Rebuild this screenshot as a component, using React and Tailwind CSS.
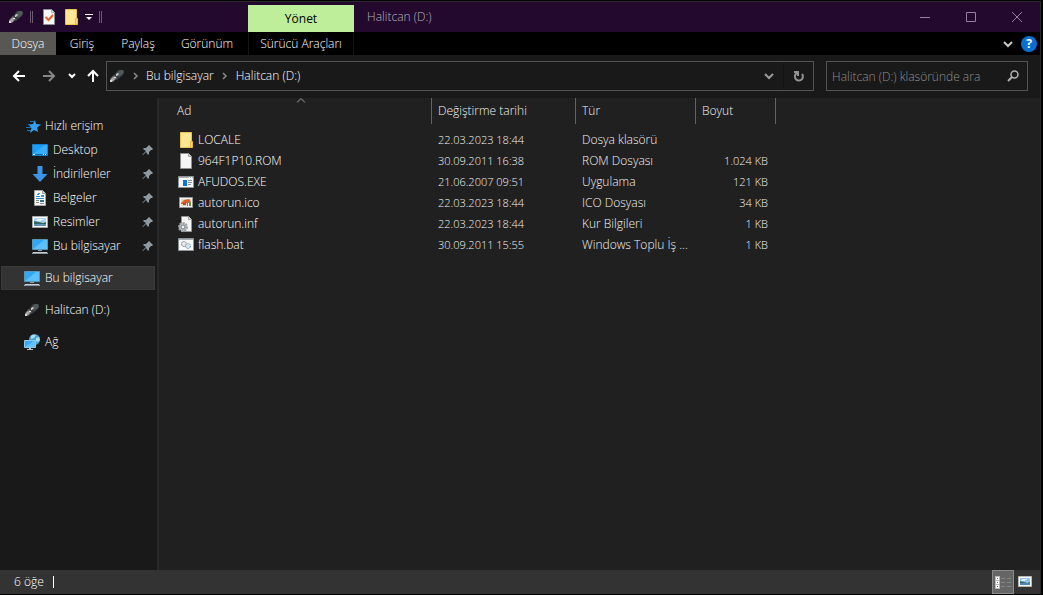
import React, { useState } from "react";

const files = [
  { name: "LOCALE", icon: "folder", date: "22.03.2023 18:44", type: "Dosya klasörü", size: "" },
  { name: "964F1P10.ROM", icon: "file", date: "30.09.2011 16:38", type: "ROM Dosyası", size: "1.024 KB" },
  { name: "AFUDOS.EXE", icon: "exe", date: "21.06.2007 09:51", type: "Uygulama", size: "121 KB" },
  { name: "autorun.ico", icon: "ico", date: "22.03.2023 18:44", type: "ICO Dosyası", size: "34 KB" },
  { name: "autorun.inf", icon: "inf", date: "22.03.2023 18:44", type: "Kur Bilgileri", size: "1 KB" },
  { name: "flash.bat", icon: "bat", date: "30.09.2011 15:55", type: "Windows Toplu İş ...", size: "1 KB" },
];

const quickAccess = [
  { name: "Desktop", icon: "desktop" },
  { name: "İndirilenler", icon: "download" },
  { name: "Belgeler", icon: "docs" },
  { name: "Resimler", icon: "pictures" },
  { name: "Bu bilgisayar", icon: "pc" },
];

const drawings = {
  usb: (
    <>
      <path d="M5 7 9 2h5l1 2-1 3-6 5-4-1z" fill="#353b3d" />
      <path d="m8 5 3-3h3l1 2-1 2-4 3z" fill="#50585a" />
      <path d="m1 11 4-4 3 3-4 4H2l-1-1z" fill="#6c6e6f" />
      <path d="m2 11 2-2 2 2-2 2H2z" fill="#a9a9a9" />
      <path d="M1 12h2v2H1z" fill="#d8d8d8" />
      <path d="m7 6 2-1 1 1-2 2H7z" fill="#c9cdce" />
      <path d="M5 9h2v1H5z" fill="#e4e4e4" />
    </>
  ),
  folder: (
    <>
      <path d="M2.500.5h11v15h-11z" fill="#ffe693" stroke="#e8c254" />
      <path d="M12.500 9.500h2v6h-2z" fill="#fbd977" stroke="#e5b943" />
    </>
  ),
  file: (
    <>
      <path d="M2.500.5h8l3 3v12h-11z" fill="#f6f6f6" stroke="#8f8f8f" />
      <path d="M10.500.5v3h3" fill="#ddd" stroke="#a5a5a5" />
    </>
  ),
  exe: (
    <>
      <path d="M.5 2.500h15v11H.5z" fill="#fafafa" stroke="#8d9499" />
      <path d="M1 3h14v1H1z" fill="#a9afb3" />
      <path d="M11 3h1v1h-1zM13 3h1v1h-1z" fill="#fff" />
      <path d="M5 6h4v6H5z" fill="#0a74d8" />
      <path d="M10 6h4v1h-4zM10 8h4v1h-4zM10 10h3v1h-3z" fill="#8a8f93" />
    </>
  ),
  ico: (
    <>
      <path d="M1.500 2.500h13v10h-13z" fill="#f5f5f5" stroke="#92989b" />
      <path d="M3 4h10v7H3z" fill="#e6d9bc" />
      <path d="m3 8 3-3 5-1 2 3-4 1-3 1H3z" fill="#d9602a" />
      <path d="M5 8h3v2H5z" fill="#8b5640" />
      <path d="M9 7h4v4H9z" fill="#718e4b" />
      <path d="M10 8h1v3h-1z" fill="#e4e5e9" />
    </>
  ),
  inf: (
    <>
      <path d="M3.500.5h7l3 3v12h-10z" fill="#f5f5f5" stroke="#949494" />
      <path d="M10.500.5v3h3" fill="#ddd" stroke="#a5a5a5" />
      <circle cx="5" cy="11" r="4" fill="#c0c6c9" stroke="#9aa2a7" strokeWidth="2" strokeDasharray="2 1" />
      <circle cx="5" cy="11" r="2" fill="#eef0f1" stroke="#757d82" />
    </>
  ),
  bat: (
    <>
      <path d="M.5 1.500h15v12H.5z" fill="#f8f8f8" stroke="#8d9499" />
      <path d="M1 2h14v1H1z" fill="#a9afb3" />
      <circle cx="6" cy="7" r="2.500" fill="#e4e7e9" stroke="#7b8388" strokeDasharray="2 1" />
      <circle cx="10" cy="9" r="2.500" fill="#cfe6f1" stroke="#7799aa" strokeDasharray="2 1" />
    </>
  ),
  desktop: (
    <>
      <path d="M.5 2.500h15v11H.5z" fill="#1e9cf5" stroke="#1583d0" />
      <path d="M1 12 13 3h2v9z" fill="#38aefa" />
      <path d="M1 12h14v1H1z" fill="#0b68b3" />
      <path d="M1 12h2v1H1zM11 12h1v1h-1zM13 12h1v1h-1z" fill="#fff" />
    </>
  ),
  download: <path d="M5.500 0h5v8h5L8 16 .5 8h5z" fill="#3b94e6" />,
  docs: (
    <>
      <path d="M2.500.5h8l3 3v12h-11z" fill="#f8f8f8" stroke="#a5a5a5" />
      <path d="M10.500.5v3h3" fill="#ddd" stroke="#999" />
      <path d="M6 3h2v1H6zM5 4h2v1H5zM4 6h4v1H4zM9 5h3v2H9zM4 8h8v1H4z" fill="#3696d5" />
      <path d="M4 10h3v1H4zM4 12h3v1H4zM8 13h4v1H8z" fill="#888" />
      <path d="M8 10h4v2H8z" fill="#366f83" />
    </>
  ),
  pictures: (
    <>
      <path d="M.5 2.500h15v11H.5z" fill="#fff" stroke="#a9a9a9" />
      <path d="M2 4h12v8H2z" fill="#a9d4f5" />
      <path d="M5 5h7v1H5zM4 6h5v1H4z" fill="#e5f4fb" />
      <path d="m2 7 5 1 4 1 3-1v2H2z" fill="#2f6a61" />
      <path d="M2 10h12v2H2z" fill="#5c93b4" />
    </>
  ),
  thumbnails: (
    <>
      <path d="M1.500 2.500h13v10h-13z" fill="#fff" stroke="#b9b9b9" />
      <path d="M3 4h10v7H3z" fill="#8fc3f0" />
      <path d="M5 5h5v1H5zM4 6h4v1H4z" fill="#e5f4fb" />
      <path d="m3 7 4 1 3 1 3-1v1H3z" fill="#2f6a61" />
      <path d="M3 9h10v2H3z" fill="#4a86b8" />
    </>
  ),
  pc: (
    <>
      <path d="M.5 1.500h15v10H.5z" fill="#31a9f8" stroke="#5696b7" />
      <path d="M1 11 12 2h3v9z" fill="#5fc0ff" />
      <path d="M6 12h4v1H6z" fill="#8aa0ad" />
      <path d="M1 14h14l1 2H0z" fill="#c5d1d9" />
      <path d="M1 15h14v1H1z" fill="#8596a1" />
    </>
  ),
  network: (
    <>
      <circle cx="10.500" cy="5.500" r="5.500" fill="#4aa4cc" />
      <path d="M7 2c2-2 4-1 5-1l-2 3-3 1zM12 4l3-1 1 3-2 2-2-1z" fill="#a9def0" />
      <path d="M.5 6.500h11v7H.5z" fill="#38acf8" stroke="#91c7e5" />
      <path d="m1 13 9-6h1v6z" fill="#65c2ff" />
      <path d="M5 14h2v1H5zM3 15h6v1H3z" fill="#b4c4ce" />
    </>
  ),
  star: (
    <>
      <path d="m10 2 1 4 5 .5-4 3 1 4.500-4-2-4 3 1.500-5L4 7l4-1z" fill="#2fa4f5" />
      <path d="M5 3h4v1H5zM3 6h4v1H3zM1 9h5v1H1zM2 12h4v1H2z" fill="#1d75b8" />
    </>
  ),
  properties: (
    <>
      <path d="M2.500.5h8l3 3v12h-11z" fill="#f8f8f8" stroke="#8d8d94" />
      <path d="M10.500.5v3h3" fill="#ddd" stroke="#aaa" />
      <path d="m4.500 8 3 3 4.500-5" fill="none" stroke="#e5602c" strokeWidth="2" />
    </>
  ),
};

function Icon({ name, className = "" }) {
  return (
    <svg viewBox="0 0 16 16" className={`h-4 w-4 shrink-0 ${className}`} aria-hidden="true">
      {drawings[name]}
    </svg>
  );
}

function Pin() {
  return (
    <svg viewBox="0 0 12 12" className="h-3 w-3 shrink-0" aria-hidden="true">
      <path d="m7 1 4 4-1 1H9L7 8v2L6 11 4 8l-3 3-.5-.5L4 7 1 5l1-1h2l2-2z" fill="#8f9ba3" />
    </svg>
  );
}

function Chevron({ className = "" }) {
  return (
    <svg viewBox="0 0 10 8" className={`h-2 w-[10px] shrink-0 ${className}`} fill="none" stroke="currentColor" strokeWidth="2" aria-hidden="true">
      <path d="m1 2 4 4 4-4" />
    </svg>
  );
}

function Crumb() {
  return (
    <svg viewBox="0 0 6 8" className="h-2 w-[6px] shrink-0" fill="none" stroke="#8a8a8a" strokeWidth="1.500" aria-hidden="true">
      <path d="m1 1 3 3-3 3" />
    </svg>
  );
}

function Arrow({ className = "" }) {
  return (
    <svg viewBox="0 0 14 14" className={`h-[14px] w-[14px] ${className}`} fill="none" stroke="currentColor" strokeWidth="2" aria-hidden="true">
      <path d="M13 7H2M7 2 2 7l5 5" />
    </svg>
  );
}

function TitleBar() {
  return (
    <header className="flex h-[53px] bg-[linear-gradient(#24092e_30px,#000_30px)]">
      <div className="flex w-[248px] shrink-0 flex-col">
        <div className="flex h-[30px] items-center pl-2">
          <Icon name="usb" />
          <span className="ml-[6px] h-3 w-[3px] border-x border-[#6b5a72]" />
          <button aria-label="Özellikler" className="ml-2"><Icon name="properties" /></button>
          <button aria-label="Yeni klasör" className="ml-[6px]"><Icon name="folder" /></button>
          <button aria-label="Hızlı Erişim Araç Çubuğunu Özelleştir" className="ml-[6px]">
            <svg viewBox="0 0 8 8" className="h-2 w-2" fill="#fff"><path d="M0 1h8v1H0zM1 4h6L4 7z" /></svg>
          </button>
          <span className="ml-[6px] h-3 w-[3px] border-x border-[#6b5a72]" />
        </div>
        <nav className="flex h-[23px] items-stretch">
          <button className="w-14 bg-[#595754]">Dosya</button>
          <button className="w-[52px]">Giriş</button>
          <button className="w-[60px]">Paylaş</button>
          <button className="w-[78px]">Görünüm</button>
        </nav>
      </div>
      <div className="flex w-[106px] shrink-0 flex-col pt-[3px]">
        <button className="h-[27px] bg-[#bfee9a] font-normal text-black">Yönet</button>
        <button className="h-[23px] border-x border-[#151515]">Sürücü Araçları</button>
      </div>
      <div className="flex min-w-0 flex-1 flex-col">
        <div className="flex h-[30px] items-center">
          <h1 className="flex-1 truncate pl-[13px] text-[#b8b0bc]">Halitcan (D:)</h1>
          <div className="flex h-full text-[#94819b]">
            <button aria-label="Simge durumuna küçült" className="grid w-[46px] place-items-center">
              <svg viewBox="0 0 10 10" className="h-[10px] w-[10px]" fill="currentColor"><path d="M0 5h10v1H0z" /></svg>
            </button>
            <button aria-label="Ekranı kapla" className="grid w-[46px] place-items-center">
              <svg viewBox="0 0 10 10" className="h-[10px] w-[10px]" fill="none" stroke="currentColor"><path d="M.5.5h9v9h-9z" /></svg>
            </button>
            <button aria-label="Kapat" className="grid w-[46px] place-items-center">
              <svg viewBox="0 0 10 10" className="h-[10px] w-[10px]" fill="none" stroke="currentColor"><path d="m0 0 10 10M10 0 0 10" /></svg>
            </button>
          </div>
        </div>
        <div className="flex h-[23px] items-center justify-end gap-2 pr-[3px]">
          <button aria-label="Şeridi genişlet" className="text-[#c9c9c9]"><Chevron /></button>
          <button aria-label="Yardım" className="h-4 w-4 rounded-full bg-[#0b6fd0] font-bold">?</button>
        </div>
      </div>
    </header>
  );
}

function AddressBar() {
  const [query, setQuery] = useState("");

  return (
    <div className="flex h-[43px] items-center gap-3 pr-3 pb-px">
      <div className="flex min-w-0 flex-1 items-center">
        <div className="flex w-[106px] shrink-0 items-center pl-3">
          <button aria-label="Geri"><Arrow /></button>
          <button aria-label="İleri" className="ml-4 text-[#868686]"><Arrow className="rotate-180" /></button>
          <button aria-label="Son konumlar" className="ml-3">
            <svg viewBox="0 0 8 6" className="h-[6px] w-2" fill="none" stroke="currentColor" strokeWidth="2"><path d="m1 1 3 3 3-3" /></svg>
          </button>
          <button aria-label="Yukarı" className="ml-[10px]"><Arrow className="rotate-90" /></button>
        </div>
        <div className="flex h-[30px] min-w-0 flex-1 items-center border border-[#535353] pl-[2px]">
          <Icon name="usb" />
          <span className="ml-2"><Crumb /></span>
          <button className="ml-[7px]">Bu bilgisayar</button>
          <span className="ml-2"><Crumb /></span>
          <button className="ml-2">Halitcan (D:)</button>
          <button aria-label="Önceki konumlar" className="ml-auto text-[#9a9a9a]"><Chevron /></button>
          <button aria-label="Yenile" className="ml-[9px] grid h-full w-[30px] place-items-center border-l border-[#141414] text-[#929292]">
            <svg viewBox="0 0 12 12" className="h-3 w-3" fill="none" stroke="currentColor" strokeWidth="2">
              <path d="M9 4a4 4 0 1 1-5-1" />
              <path d="M1 2h4v4" />
            </svg>
          </button>
        </div>
      </div>
      <div className="flex h-[30px] w-[202px] shrink-0 items-center border border-[#535353] pr-2 pl-[5px]">
        <input
          type="search"
          aria-label="Klasörde ara"
          value={query}
          placeholder="Halitcan (D:) klasöründe ara"
          className="h-full min-w-0 flex-1 bg-transparent outline-none placeholder:text-[#8f8f8f]"
          onChange={(e) => setQuery(e.target.value)}
        />
        <svg viewBox="0 0 12 12" className="h-3 w-3 shrink-0" fill="none" stroke="#b0b0b0" aria-hidden="true">
          <circle cx="7.500" cy="4.500" r="3.500" strokeWidth="1.500" />
          <path d="M5 7 1 11" strokeWidth="2" />
        </svg>
      </div>
    </div>
  );
}

function Sidebar() {
  return (
    <aside className="w-[159px] shrink-0 border-r-2 border-[#292929] pt-4 pr-[2px] pl-px">
      <a href="#quick" className="flex h-6 items-center gap-1 pl-6"><Icon name="star" />Hızlı erişim</a>
      <ul>
        {quickAccess.map((item) => (
          <li key={item.name}>
            <a href="#item" className="flex h-6 items-center gap-[5px] pr-px pl-[31px]">
              <Icon name={item.icon} />
              <span className="flex-1 whitespace-nowrap">{item.name}</span>
              <Pin />
            </a>
          </li>
        ))}
      </ul>
      <div className="mt-2 flex flex-col gap-2">
        <a href="#pc" className="flex h-6 items-center gap-[5px] border border-[#3a3a3a] bg-[#333] pl-[22px]"><Icon name="pc" />Bu bilgisayar</a>
        <a href="#drive" className="flex h-6 items-center gap-[5px] pl-[23px]"><Icon name="usb" />Halitcan (D:)</a>
        <a href="#network" className="flex h-6 items-center gap-[5px] pl-[23px]"><Icon name="network" />Ağ</a>
      </div>
    </aside>
  );
}

function FileList() {
  return (
    <main className="min-w-0 flex-1 bg-[#202020] pl-3">
      <table className="w-[605px] table-fixed border-separate border-spacing-0 text-left text-[#f2f2f2]">
        <colgroup>
          <col className="w-[261px]" />
          <col className="w-[144px]" />
          <col className="w-[120px]" />
          <col className="w-[80px]" />
        </colgroup>
        <thead>
          <tr className="h-[26px]">
            <th className="relative border-r border-[#636363] px-[6px] font-light">
              <svg viewBox="0 0 9 5" className="absolute top-0 left-1/2 h-[5px] w-[9px] -translate-x-1/2" fill="none" stroke="#a0a0a0" aria-hidden="true">
                <path d="m.5 4.500 4-4 4 4" />
              </svg>
              Ad
            </th>
            <th className="border-r border-[#636363] px-[6px] font-light">Değiştirme tarihi</th>
            <th className="border-r border-[#636363] px-[6px] font-light">Tür</th>
            <th className="border-r border-[#636363] px-[6px] font-light">Boyut</th>
          </tr>
        </thead>
        <tbody className="before:block before:h-[5px]">
          {files.map((file) => (
            <tr key={file.name} className="h-[21px]">
              <td className="px-[7px] text-white">
                <div className="flex items-center gap-1"><Icon name={file.icon} />{file.name}</div>
              </td>
              <td className="px-[6px] text-[11px]">{file.date}</td>
              <td className="px-[6px] whitespace-nowrap">{file.type}</td>
              <td className="px-2 text-right text-[11px] whitespace-nowrap">{file.size}</td>
            </tr>
          ))}
        </tbody>
      </table>
    </main>
  );
}

function StatusBar() {
  return (
    <footer className="flex h-6 items-center bg-[#333] pl-[14px]">
      <span>6 öğe</span>
      <span className="ml-[9px] h-3 w-px bg-white" />
      <button aria-label="Ayrıntılar" className="ml-auto grid h-6 w-[22px] place-items-center border border-[#8a8a8a] bg-[#666]">
        <svg viewBox="0 0 16 13" className="h-[13px] w-4" aria-hidden="true">
          <path d="M0 0h5v13H0z" fill="#b9b9b9" />
          <path d="M1 1h3v3H1zM1 5h3v3H1zM1 9h3v3H1z" fill="#fff" />
          <path d="M2 2h1v1H2z" fill="#317d58" />
          <path d="M2 6h1v1H2z" fill="#2979c6" />
          <path d="M2 10h1v1H2z" fill="#c41c3b" />
          <path d="M6 2h4v1H6zM12 2h4v1h-4zM6 6h4v1H6zM12 6h4v1h-4zM6 10h4v1H6zM12 10h4v1h-4z" fill="#858585" />
        </svg>
      </button>
      <button aria-label="Büyük küçük resimler" className="mr-[7px] ml-[3px]"><Icon name="thumbnails" /></button>
    </footer>
  );
}

function App() {
  return (
    <div className="min-h-screen bg-black pt-px pr-[2px] pb-px font-['Open_Sans',sans-serif] text-[12px] leading-4 font-light text-white">
      <div className="flex min-h-[calc(100vh-2px)] flex-col border-t border-r border-[#2b2b2b] bg-[#191919]">
        <TitleBar />
        <AddressBar />
        <div className="flex flex-1">
          <Sidebar />
          <FileList />
        </div>
        <StatusBar />
      </div>
    </div>
  );
}

export default App;
